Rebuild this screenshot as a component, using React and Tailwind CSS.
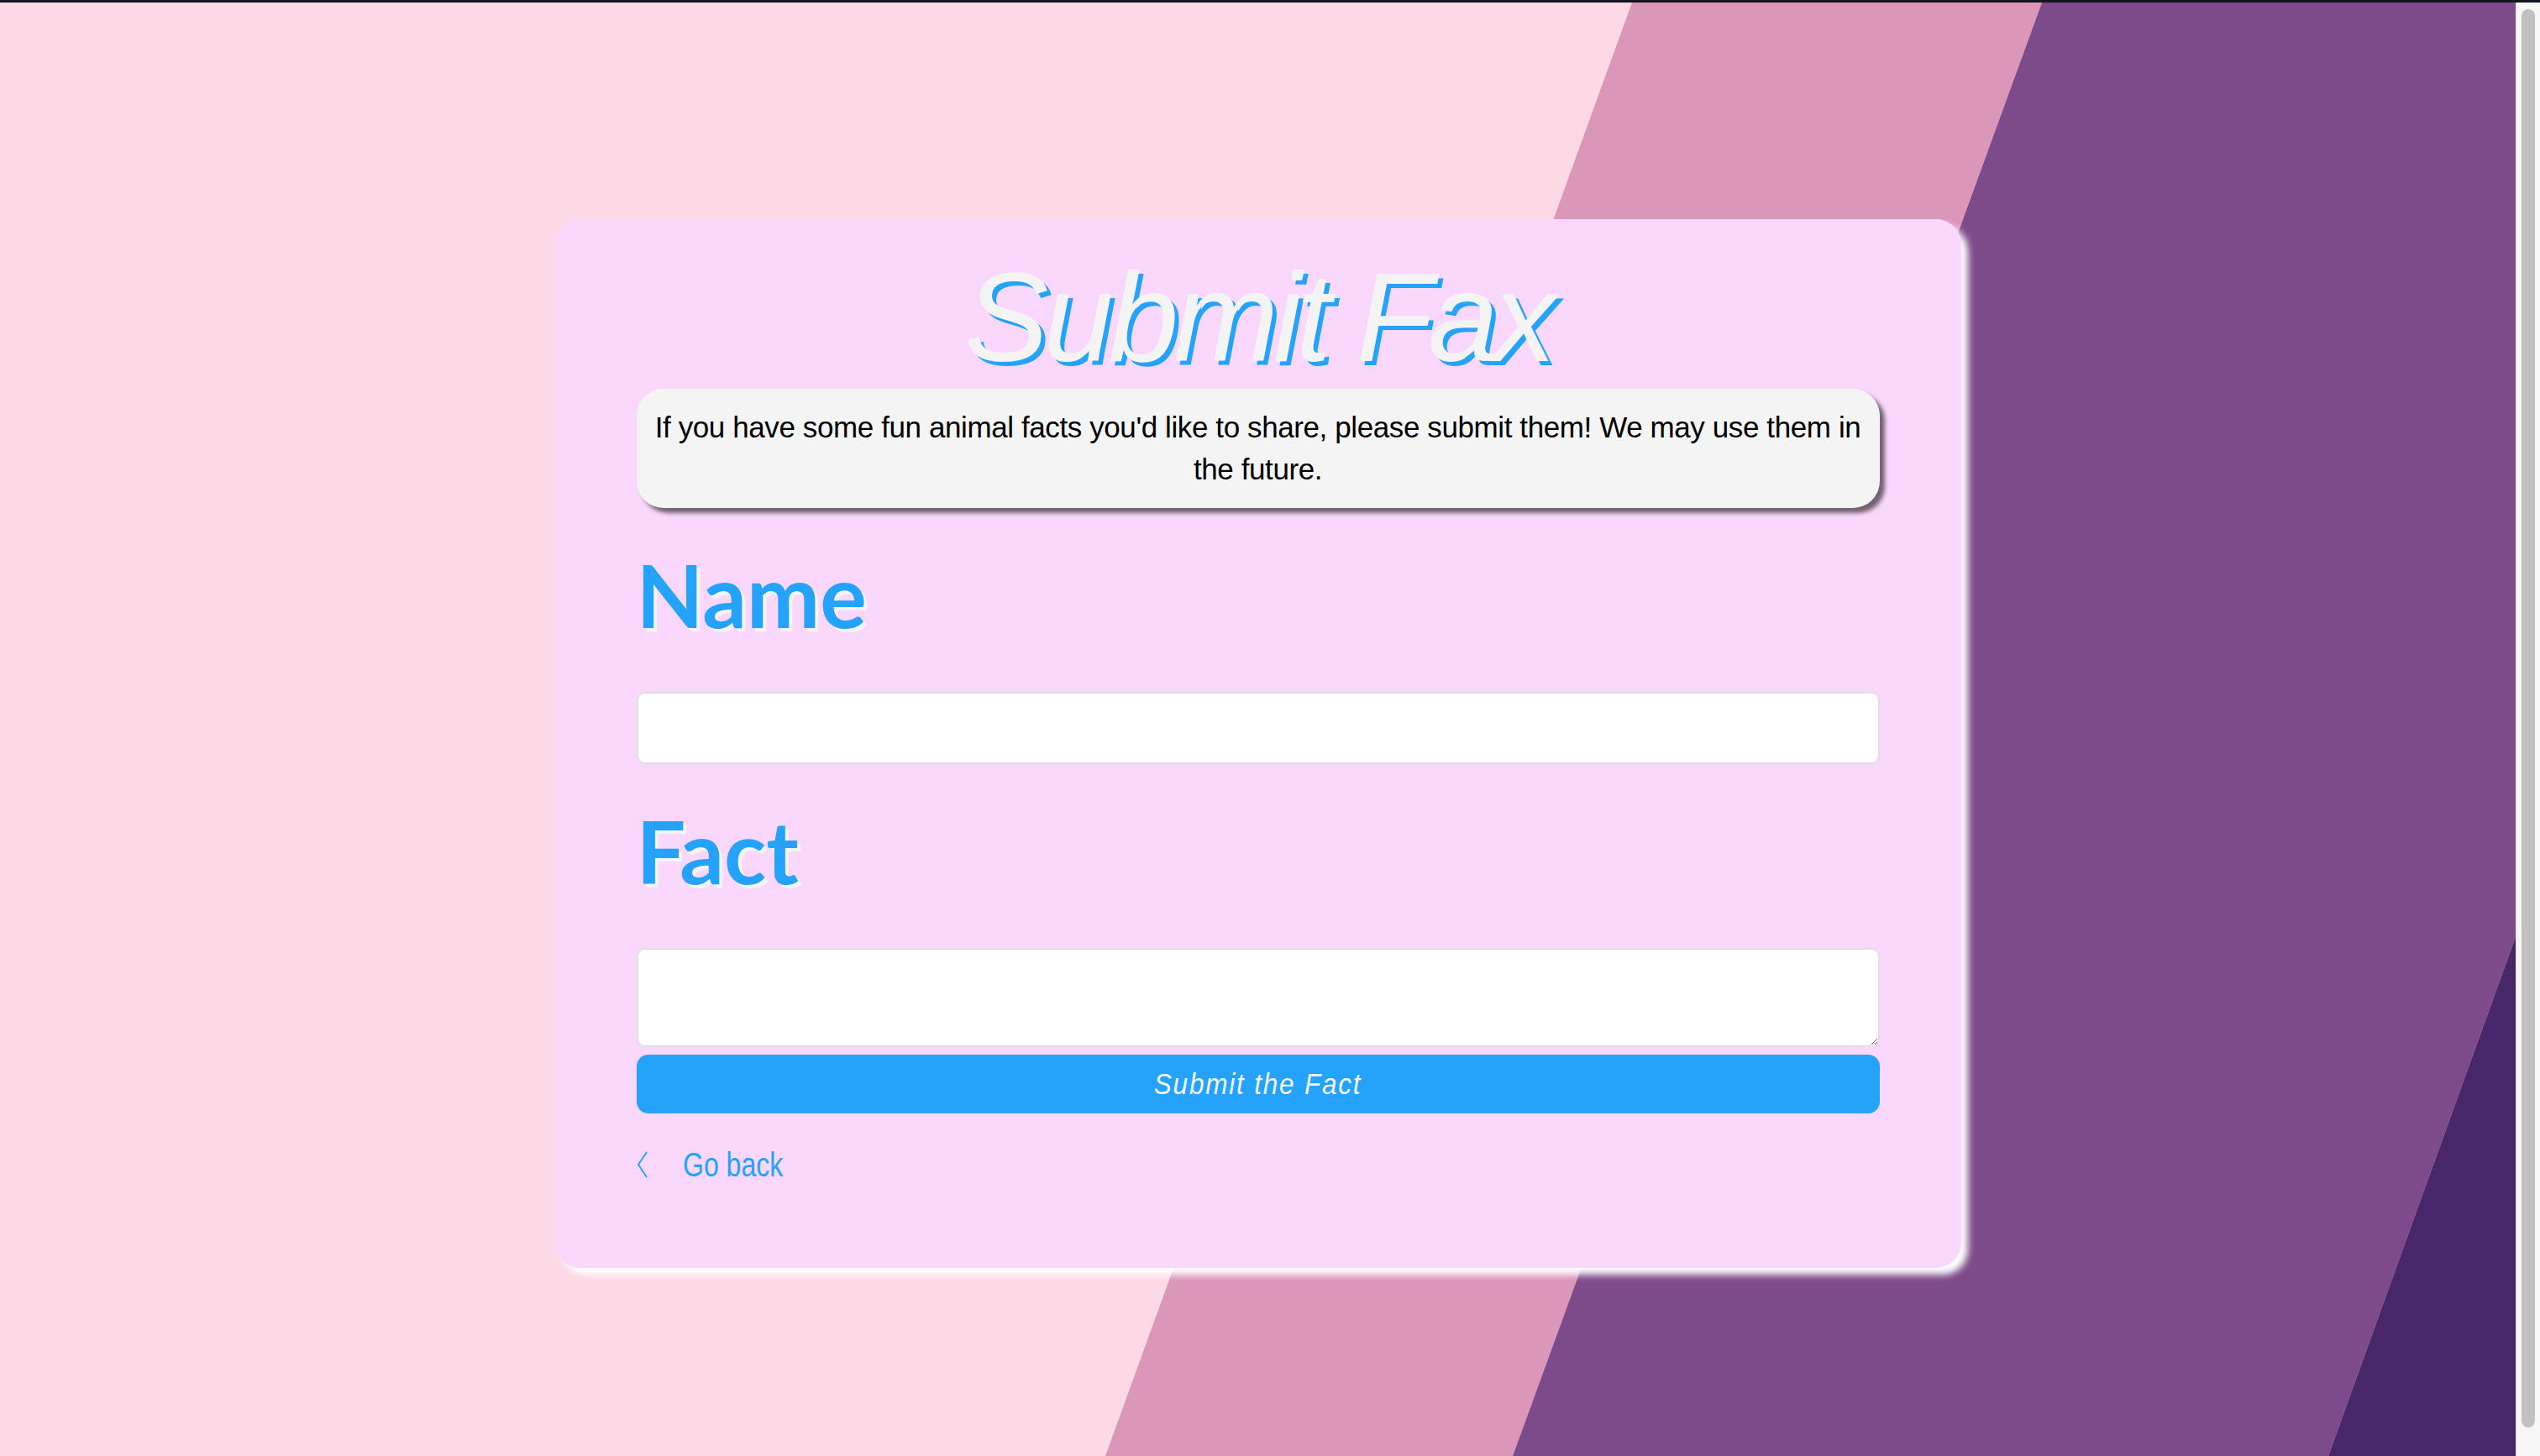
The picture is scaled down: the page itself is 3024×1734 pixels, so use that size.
import React from 'react';

const sans = "font-['Liberation_Sans',Arial,sans-serif]";

const Stripes = () => (
  <svg className="absolute inset-0 h-full w-full" viewBox="0 0 2995 1734" preserveAspectRatio="none">
    <rect x="0" y="0" width="2995" height="1734" fill="#fdd9e6" />
    <polygon points="1943,0 2431,0 1801,1734 1316,1734" fill="#db97ba" />
    <polygon points="2431,0 3396,0 2772,1734 1801,1734" fill="#7e4b8a" />
    <polygon points="3396,0 3600,0 3600,1734 2772,1734" fill="#472669" />
  </svg>
);

const FieldLabel = ({ children }) => (
  <h2 className="mt-[43px] text-[104px] leading-[120px] font-bold font-['Lato',sans-serif] text-[#25a3fb] [text-shadow:4px_4px_0_#f4f4f4]">
    {children}
  </h2>
);

export default function App() {
  return (
    <div className="h-[1734px] w-full flex flex-col overflow-hidden">
      {/* browser strip */}
      <div className="h-[3px] bg-[#0f1720]" />
      <div className="flex flex-1">
        {/* Page */}
        <div className="relative flex-1">
          <Stripes />
          <div className="relative flex justify-center pt-[258px]">
            <div className="w-[1674px] bg-[#fad7fc] rounded-[30px] shadow-[8px_8px_8px_#ffffff] px-[97px] pt-[32px] pb-[98px]">
              <h1 className={`text-center text-[150px] leading-[170px] italic tracking-[-6px] text-[#f4f4f4] [text-shadow:5px_5px_0_#25a3fb] ${sans}`}>
                Submit Fax
              </h1>
              <div className={`bg-[#f4f4f4] rounded-[32px] px-[12px] py-[21px] shadow-[6px_6px_5px_rgba(0,0,0,0.55)] text-center text-black text-[35px] leading-[50px] tracking-[-0.4px] ${sans}`}>
                If you have some fun animal facts you'd like to share, please submit them! We may use them in the future.
              </div>

              <FieldLabel>Name</FieldLabel>
              <input
                type="text"
                className="mt-[56px] block w-full h-[86px] bg-white border-2 border-[#e0e0e0] rounded-[10px] px-4 text-[34px] outline-none"
              />

              <FieldLabel>Fact</FieldLabel>
              <textarea className="mt-[56px] block w-full h-[118px] bg-white border-2 border-[#e0e0e0] rounded-[10px] px-4 text-[34px] outline-none" />

              <button className={`mt-[9px] flex items-center justify-center w-full h-[70px] bg-[#25a3fb] rounded-[14px] text-[#f4f4f4] italic text-[35px] tracking-[2px] ${sans}`}>
                <span className="inline-block scale-x-[0.9]">Submit the Fact</span>
              </button>

              <a href="#" className={`mt-[36px] flex items-center text-[#25a3fb] text-[40px] leading-[50px] ${sans}`}>
                <svg width="13" height="32" viewBox="0 0 13 32" className="mr-[42px]">
                  <polyline points="12,1 2,16 12,31" fill="none" stroke="#25a3fb" strokeWidth="2" />
                </svg>
                <span className="inline-block origin-left scale-x-[0.8]">Go back</span>
              </a>
            </div>
          </div>
        </div>
        {/* scrollbar */}
        <div className="w-[29px] bg-[#f7f7f7] border-l border-[#e6e6e6] flex justify-center pt-[8px] pb-[34px]">
          <div className="w-[16px] h-full rounded-full bg-[#c1c1c1]" />
        </div>
      </div>
    </div>
  );
}
